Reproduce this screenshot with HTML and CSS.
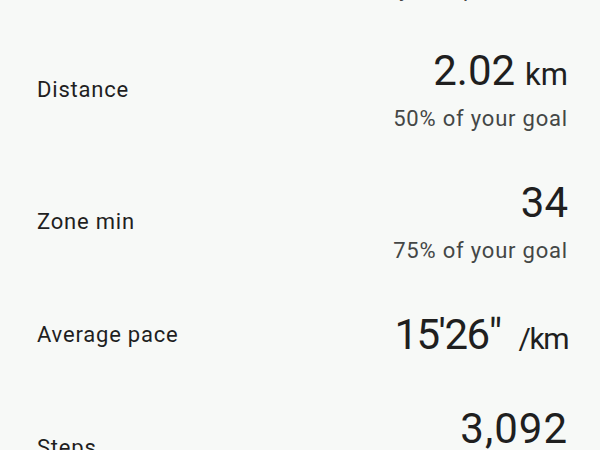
FILE: index.html
```html
<!DOCTYPE html>
<html lang="en">
<head>
    <meta charset="UTF-8">
    <meta name="viewport" content="width=device-width, initial-scale=1.0">
    <title>Walk details</title>
    <link rel="stylesheet" href="styles.css">
</head>
<body>
    <main class="stats">
        <p class="stats-note">Nice work on this walk, today at 4 pm</p>
        <div class="stat-row">
            <span class="stat-label">Distance</span>
            <div class="stat-value">
                <div class="stat-number">2.02<span class="stat-unit">km</span></div>
                <div class="stat-goal">50% of your goal</div>
            </div>
        </div>
        <div class="stat-row">
            <span class="stat-label">Zone min</span>
            <div class="stat-value">
                <div class="stat-number">34</div>
                <div class="stat-goal">75% of your goal</div>
            </div>
        </div>
        <div class="stat-row">
            <span class="stat-label">Average pace</span>
            <div class="stat-value">
                <div class="stat-number stat-number-pace">15'26"<span class="stat-unit stat-unit-pace">/km</span></div>
            </div>
        </div>
        <div class="stat-row">
            <span class="stat-label">Steps</span>
            <div class="stat-value">
                <div class="stat-number stat-number-steps">3,092</div>
                <div class="stat-goal">31% of your goal</div>
            </div>
        </div>
    </main>
</body>
</html>
```

FILE: styles.css
```css
body {
    font-family: 'Roboto', 'Liberation Sans', sans-serif;
    color: #1f1f1f;
    background-color: #f7f9f7;
    margin: 0;
    padding: 0;
}
.stats {
    display: flex;
    flex-direction: column;
}
.stats-note {
    margin: -25px 0 21px;
    font-size: 22px;
    line-height: 28px;
    letter-spacing: 0.8px;
    text-align: center;
    color: #444746;
}
.stat-row {
    display: flex;
    align-items: center;
    justify-content: space-between;
    padding: 23px 32px 23px 37px;
}
.stat-label {
    font-size: 22px;
    line-height: 28px;
    letter-spacing: 0.8px;
}
.stat-value {
    text-align: right;
}
.stat-number {
    font-size: 42px;
    line-height: 48px;
}
.stat-number-pace {
    letter-spacing: -1.5px;
}
.stat-number-steps {
    letter-spacing: 1px;
}
.stat-unit {
    font-size: 31px;
    line-height: 1;
    margin-left: 10px;
    letter-spacing: 0;
}
.stat-unit-pace {
    font-size: 30px;
    margin-left: 18px;
    letter-spacing: -1.5px;
}
.stat-goal {
    margin-top: 10px;
    font-size: 22px;
    line-height: 28px;
    letter-spacing: 0.8px;
    color: #444746;
}
```
